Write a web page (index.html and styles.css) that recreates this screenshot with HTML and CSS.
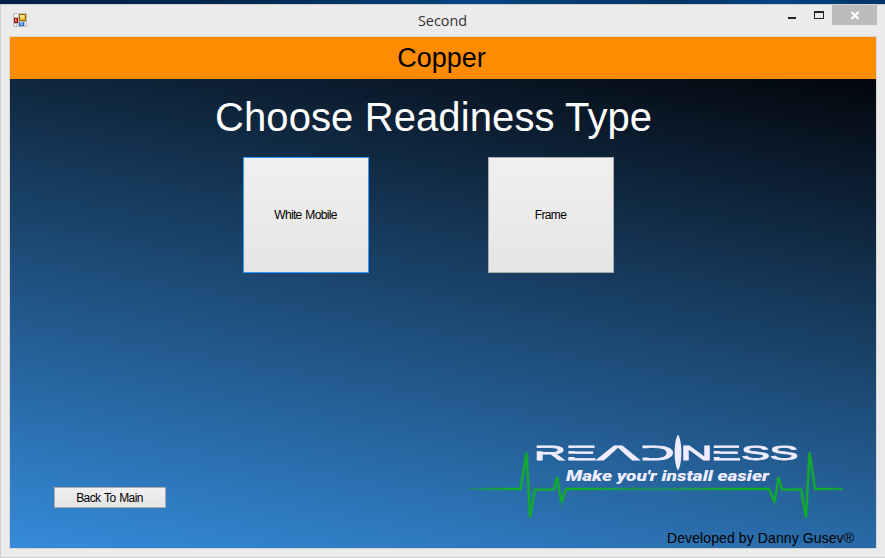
FILE: index.html
```html
<!DOCTYPE html>
<html lang="en">
<head>
<meta charset="utf-8">
<title>Second</title>
<link rel="stylesheet" href="styles.css">
</head>
<body>
<div class="desktop">
  <div class="window">
    <header class="titlebar">
      <svg class="app-icon" width="14" height="14" viewBox="0 0 14 14" shape-rendering="crispEdges">
        <path fill="#bcbcbc" d="M0 0h14v14H0z"/>
        <path fill="#f2f2f2" d="M1 1h4v3H1zM1 11h2v2H1zM4 11h1v2H4zM12 9h1v4h-1z"/>
        <path fill="#a11616" d="M1 5h4v5H1z"/><path fill="#e55343" d="M2 6h2v3H2z"/><path fill="#f5aaa0" d="M2 6h1v2H2z"/>
        <path fill="#9a6d00" d="M6 1h7v7H6z"/><path fill="#f5c02d" d="M7 2h5v5H7z"/><path fill="#ffe48b" d="M7 2h4v3H7z"/>
        <path fill="#2f67c4" d="M6 9h5v4H6z"/><path fill="#7eb0f5" d="M7 9h3v3H7z"/>
      </svg>
      <h1 class="caption">Second</h1>
      <div class="controls">
        <svg width="92" height="20" viewBox="0 0 92 20" shape-rendering="crispEdges">
          <path fill="#bcbcbc" d="M47 0h45v20H47z"/>
          <path fill="#242424" d="M3 12h8v2H3zM29 6h10v8H29zM30 8v5h8V8z" fill-rule="evenodd"/>
          <path class="close-mark" d="M66.500 7l7 7M73.500 7l-7 7" shape-rendering="auto"/>
        </svg>
      </div>
    </header>
    <main class="client">
      <div class="banner">Copper</div>
      <section class="body">
        <h2 class="heading">Choose Readiness Type</h2>
        <div class="choices">
          <button class="btn choice focused">White Mobile</button>
          <button class="btn choice">Frame</button>
        </div>
        <div class="bottom">
          <button class="btn back">Back To Main</button>
          <div class="brand">
            <svg class="logo" width="380" height="92" viewBox="466 430 380 92">
              <defs>
                <linearGradient id="pulse" gradientUnits="userSpaceOnUse" x1="466" y1="0" x2="846" y2="0">
                  <stop offset="0" stop-color="#12ac2c" stop-opacity=".2"/>
                  <stop offset=".12" stop-color="#12ac2c"/>
                  <stop offset=".3" stop-color="#12ac2c"/>
                  <stop offset=".5" stop-color="#159a50" stop-opacity=".65"/>
                  <stop offset=".72" stop-color="#12ac2c"/>
                  <stop offset=".94" stop-color="#12ac2c"/>
                  <stop offset="1" stop-color="#12ac2c" stop-opacity=".65"/>
                </linearGradient>
                <mask id="stencil" maskUnits="userSpaceOnUse" x="530" y="430" width="275" height="45">
                  <path fill="#fff" d="M530 430h275v45H530z"/>
                  <path fill="#000" d="M534 448h10v3.200h-10zM564 448h11v3h-11zM564 453.800h11v3.200h-11zM639 448.200h11v9.300h-11zM712.500 448h8v3h-8zM712.500 453.800h8v3.200h-8zM618 447.800L603.500 461h29z"/>
                </mask>
              </defs>
              <path class="glow" d="M467 489H520.500L526.500 453L530 517L535 489.500H554L557 477.500L561.500 502L566 489H769L774.500 502L778.500 477.500L782 489.500H801L806 517L809.500 453L815 489H843"/>
              <path class="pulse" d="M467 489H520.500L526.500 453L530 517L535 489.500H554L557 477.500L561.500 502L566 489H769L774.500 502L778.500 477.500L782 489.500H801L806 517L809.500 453L815 489.010H843"/>
              <g mask="url(#stencil)">
                <text class="wordmark" y="459.700"><tspan x="534" textLength="32" lengthAdjust="spacingAndGlyphs">R</tspan><tspan x="565.500" textLength="31" lengthAdjust="spacingAndGlyphs">E</tspan><tspan x="597" textLength="42" lengthAdjust="spacingAndGlyphs">A</tspan><tspan x="639.500" textLength="35" lengthAdjust="spacingAndGlyphs">D</tspan><tspan x="676" textLength="4" lengthAdjust="spacingAndGlyphs">I</tspan><tspan x="680.500" textLength="32" lengthAdjust="spacingAndGlyphs">N</tspan><tspan x="711" textLength="30" lengthAdjust="spacingAndGlyphs">E</tspan><tspan x="741" textLength="29" lengthAdjust="spacingAndGlyphs">S</tspan><tspan x="769.500" textLength="29" lengthAdjust="spacingAndGlyphs">S</tspan></text>
              </g>
              <path fill="#efedff" d="M678 434.500C682.500 441 682.500 464 678 470.500C673.500 464 673.500 441 678 434.500Z"/>
              <text class="tagline" x="566" y="481" textLength="203" lengthAdjust="spacingAndGlyphs">Make you'r install easier</text>
            </svg>
            <p class="credit">Developed by Danny Gusev®</p>
          </div>
        </div>
      </section>
    </main>
  </div>
</div>
</body>
</html>
```
FILE: styles.css
```css
* { box-sizing: border-box; }
body { margin: 0; overflow: hidden; font-family: "Liberation Sans", Arial, sans-serif; }
.desktop {
  width: 885px; height: 558px; padding-top: 4px;
  background: linear-gradient(90deg, #00204a, #002850 28%, #034581 53%, #023465 76%, #004486 88%, #003468);
}
.window {
  width: 885px; height: 554px; padding: 0 8px 8px;
  background: #ebebeb;
  border: solid #d0d0d0; border-width: 1px 0 1px 1px;
}
.titlebar { display: flex; height: 31px; align-items: flex-start; }
.app-icon { margin: 8px 0 0 4px; }
.caption {
  flex: 1; margin: 6px 0 0 73px; text-align: center;
  font: 400 14.400px/20px "Open Sans", "Noto Sans", sans-serif; color: #333;
}
.controls { display: flex; width: 92px; }
.close-mark { fill: none; stroke: #fff; stroke-width: 2; }
.client {
  display: flex; flex-direction: column;
  width: 868px; height: 513px; border: 1px solid #d6d6d6;
}
.banner {
  height: 42px; padding-right: 3px; background: #ff8c00; color: #000;
  font-size: 27px; line-height: 42px; text-align: center;
}
.body {
  display: flex; flex: 1; flex-direction: column;
  background: linear-gradient(190deg, #03060c, #358bda);
}
.heading {
  margin: 15px 0 0 205px; color: #fff;
  font-size: 40px; font-weight: 400; line-height: 46px; white-space: nowrap;
  letter-spacing: .1px;
}
.choices { display: flex; gap: 119px; margin: 17px 0 0 233px; }
.btn {
  padding: 0; border: 1px solid #acacac;
  background: linear-gradient(#f0f0f0, #e5e5e5);
  font: 12px/13px "Liberation Sans", Arial, sans-serif; color: #000;
  letter-spacing: -.65px; word-spacing: 1px;
}
.choice { width: 126px; height: 116px; padding-right: 1px; }
.focused { border-color: #3399ff; }
.bottom { display: flex; margin-top: 157px; }
.back { width: 112px; height: 21px; margin: 57px 0 0 44px; padding: 1px 1px 0 0; letter-spacing: -.6px; word-spacing: 1px; }
.brand { width: 390px; margin-left: 300px; }
.logo { display: block; }
.pulse { fill: none; stroke: url(#pulse); stroke-width: 2; stroke-linejoin: round; }
.glow { fill: none; stroke: url(#pulse); stroke-width: 4; stroke-opacity: .25; }
.wordmark {
  font: 400 20.500px "Liberation Sans", Arial, sans-serif;
  fill: #efedff; stroke: #efedff; stroke-width: .8;
}
.tagline { font: italic 900 14px Roboto, "Liberation Sans", sans-serif; fill: #efedff; }
.credit {
  margin: 8px 0 0 201px; font-size: 14px; line-height: 16px;
  letter-spacing: .1px; white-space: nowrap; color: #000;
}
```
